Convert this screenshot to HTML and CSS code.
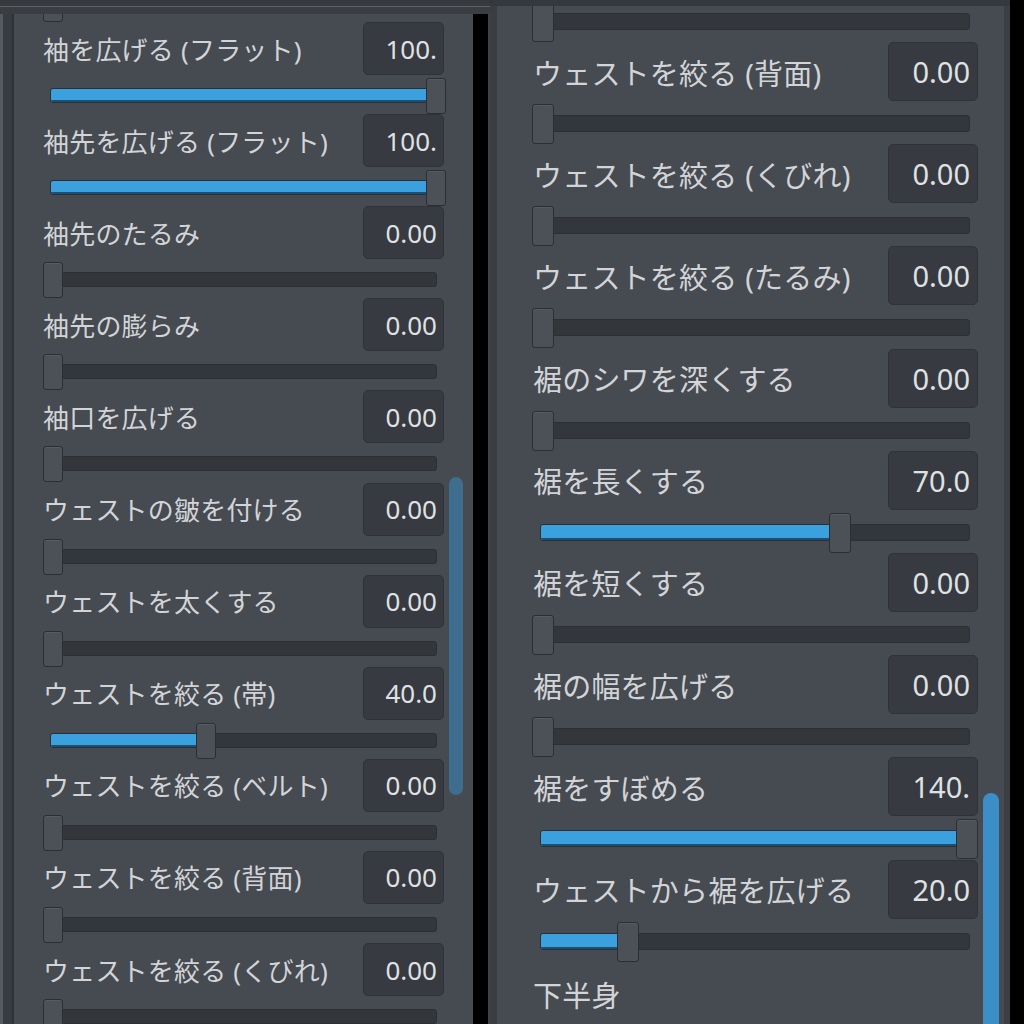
FILE: index.html
```html
<!DOCTYPE html>
<html lang="ja">
<head>
<meta charset="utf-8">
<title>Sliders</title>
<link rel="stylesheet" href="styles.css">
</head>
<body>
<div class="screen">
  <section class="half half-left">
    <div class="topbar-left"></div>
    <div class="body-left">
      <div class="edge-light"></div>
      <div class="edge-dark"></div>
      <div class="edge-border"></div>
      <div class="panel panel-left">
        <div class="list list-left">
          <div class="slider s-left"><div class="track"><div class="fill" style="width:0px"></div></div><div class="handle" style="left:0px"></div></div>

          <div class="hdr h-left"><span class="label">袖を広げる (フラット)</span><span class="box">100.</span></div>
          <div class="slider s-left"><div class="track"><div class="fill" style="width:380px"></div></div><div class="handle" style="left:383px"></div></div>

          <div class="hdr h-left"><span class="label">袖先を広げる (フラット)</span><span class="box">100.</span></div>
          <div class="slider s-left"><div class="track"><div class="fill" style="width:380px"></div></div><div class="handle" style="left:383px"></div></div>

          <div class="hdr h-left"><span class="label">袖先のたるみ</span><span class="box">0.00</span></div>
          <div class="slider s-left"><div class="track"><div class="fill" style="width:0px"></div></div><div class="handle" style="left:0px"></div></div>

          <div class="hdr h-left"><span class="label">袖先の膨らみ</span><span class="box">0.00</span></div>
          <div class="slider s-left"><div class="track"><div class="fill" style="width:0px"></div></div><div class="handle" style="left:0px"></div></div>

          <div class="hdr h-left"><span class="label">袖口を広げる</span><span class="box">0.00</span></div>
          <div class="slider s-left"><div class="track"><div class="fill" style="width:0px"></div></div><div class="handle" style="left:0px"></div></div>

          <div class="hdr h-left"><span class="label">ウェストの皺を付ける</span><span class="box">0.00</span></div>
          <div class="slider s-left"><div class="track"><div class="fill" style="width:0px"></div></div><div class="handle" style="left:0px"></div></div>

          <div class="hdr h-left"><span class="label">ウェストを太くする</span><span class="box">0.00</span></div>
          <div class="slider s-left"><div class="track"><div class="fill" style="width:0px"></div></div><div class="handle" style="left:0px"></div></div>

          <div class="hdr h-left"><span class="label">ウェストを絞る (帯)</span><span class="box">40.0</span></div>
          <div class="slider s-left"><div class="track"><div class="fill" style="width:149px"></div></div><div class="handle" style="left:153px"></div></div>

          <div class="hdr h-left"><span class="label">ウェストを絞る (ベルト)</span><span class="box">0.00</span></div>
          <div class="slider s-left"><div class="track"><div class="fill" style="width:0px"></div></div><div class="handle" style="left:0px"></div></div>

          <div class="hdr h-left"><span class="label">ウェストを絞る (背面)</span><span class="box">0.00</span></div>
          <div class="slider s-left"><div class="track"><div class="fill" style="width:0px"></div></div><div class="handle" style="left:0px"></div></div>

          <div class="hdr h-left"><span class="label">ウェストを絞る (くびれ)</span><span class="box">0.00</span></div>
          <div class="slider s-left"><div class="track"><div class="fill" style="width:0px"></div></div><div class="handle" style="left:0px"></div></div>
        </div>
        <div class="scroll scroll-left"></div>
      </div>
      <div class="gap-black"></div>
      <div class="gap-gray"></div>
    </div>
  </section>

  <section class="half half-right">
    <div class="topbar-right"></div>
    <div class="body-right">
      <div class="edge-right-l"></div>
      <div class="panel panel-right">
        <div class="list list-right">
          <div class="slider s-right"><div class="track"><div class="fill" style="width:0px"></div></div><div class="handle" style="left:0px"></div></div>

          <div class="hdr h-right"><span class="label">ウェストを絞る (背面)</span><span class="box">0.00</span></div>
          <div class="slider s-right"><div class="track"><div class="fill" style="width:0px"></div></div><div class="handle" style="left:0px"></div></div>

          <div class="hdr h-right"><span class="label">ウェストを絞る (くびれ)</span><span class="box">0.00</span></div>
          <div class="slider s-right"><div class="track"><div class="fill" style="width:0px"></div></div><div class="handle" style="left:0px"></div></div>

          <div class="hdr h-right"><span class="label">ウェストを絞る (たるみ)</span><span class="box">0.00</span></div>
          <div class="slider s-right"><div class="track"><div class="fill" style="width:0px"></div></div><div class="handle" style="left:0px"></div></div>

          <div class="hdr h-right"><span class="label">裾のシワを深くする</span><span class="box">0.00</span></div>
          <div class="slider s-right"><div class="track"><div class="fill" style="width:0px"></div></div><div class="handle" style="left:0px"></div></div>

          <div class="hdr h-right"><span class="label">裾を長くする</span><span class="box">70.0</span></div>
          <div class="slider s-right"><div class="track"><div class="fill" style="width:293px"></div></div><div class="handle" style="left:297px"></div></div>

          <div class="hdr h-right"><span class="label">裾を短くする</span><span class="box">0.00</span></div>
          <div class="slider s-right"><div class="track"><div class="fill" style="width:0px"></div></div><div class="handle" style="left:0px"></div></div>

          <div class="hdr h-right"><span class="label">裾の幅を広げる</span><span class="box">0.00</span></div>
          <div class="slider s-right"><div class="track"><div class="fill" style="width:0px"></div></div><div class="handle" style="left:0px"></div></div>

          <div class="hdr h-right"><span class="label">裾をすぼめる</span><span class="box">140.</span></div>
          <div class="slider s-right"><div class="track"><div class="fill" style="width:420px"></div></div><div class="handle" style="left:424px"></div></div>

          <div class="hdr h-right"><span class="label">ウェストから裾を広げる</span><span class="box">20.0</span></div>
          <div class="slider s-right"><div class="track"><div class="fill" style="width:81px"></div></div><div class="handle" style="left:85px"></div></div>

          <div class="section"><span class="label">下半身</span></div>
        </div>
        <div class="scroll scroll-right"></div>
      </div>
      <div class="edge-right-r"></div>
      <div class="edge-right-black"></div>
    </div>
  </section>
</div>
</body>
</html>
```

FILE: styles.css
```css
* { box-sizing: border-box; }

html, body {
  margin: 0;
  padding: 0;
  background: #000;
}

body {
  width: 1024px;
  height: 1024px;
  overflow: hidden;
  font-family: "Noto Sans", "Noto Sans CJK JP", sans-serif;
}

.screen {
  display: flex;
  width: 1024px;
  height: 1024px;
}

.half {
  display: flex;
  flex-direction: column;
  height: 1024px;
}

.half-left { width: 490px; }
.half-right { width: 534px; }

.topbar-left {
  height: 14px;
  flex: none;
  background: linear-gradient(to bottom, #36393e 0 6px, #5e6267 6px 7px, #3a3d42 7px 14px);
}

.topbar-right {
  height: 6px;
  flex: none;
  margin-right: 14px;
  background: #35383c;
}

.body-left, .body-right {
  display: flex;
  flex: 1;
  min-height: 0;
}

.edge-light { width: 3px; background: #575a5f; }
.edge-dark { width: 9px; background: #383b40; }
.edge-border { width: 2px; background: #2e3135; }

.gap-black { width: 15px; background: #000; }
.gap-gray { width: 2px; background: #3e4146; }

.edge-right-l { width: 7px; background: #3a3d41; }
.edge-right-r { width: 6px; background: #3b3e43; }
.edge-right-black { width: 14px; background: #000; }

.panel {
  position: relative;
  overflow: hidden;
  background: #464a51;
}

.panel-left { width: 459px; }
.panel-right { width: 507px; }

.list {
  display: flex;
  flex-direction: column;
}

.list-left { margin-top: -31px; }
.list-right { margin-top: -7.2px; }

.hdr {
  display: flex;
  align-items: center;
  justify-content: space-between;
  flex: none;
}

.label {
  color: #d2d4d7;
  white-space: nowrap;
  letter-spacing: 0.2px;
}

.box {
  display: flex;
  align-items: center;
  justify-content: flex-end;
  background: #373a40;
  border: 1px solid #2f3237;
  border-radius: 5px;
  color: #dfe1e3;
  overflow: hidden;
  white-space: nowrap;
}

.h-left {
  height: 53px;
  padding: 0 29px;
  font-size: 26px;
}

.h-left .box {
  width: 81px;
  height: 53px;
  padding-right: 6px;
}

.h-right {
  height: 59px;
  padding: 0 26px 0 36px;
  font-size: 29px;
}

.h-right .box {
  width: 90px;
  height: 59px;
  padding-right: 7px;
}

.slider {
  position: relative;
  flex: none;
}

.s-left {
  margin: 3px 0 0 29px;
  width: 403px;
  height: 36.1px;
}

.s-right {
  margin: 3px 0 0 35px;
  width: 446px;
  height: 40.2px;
}

.track {
  position: absolute;
  background: #33363b;
  border: 1px solid #2c2f33;
  border-radius: 3px;
  overflow: hidden;
}

.s-left .track {
  left: 7px;
  right: 9px;
  top: 10px;
  height: 15px;
}

.s-right .track {
  left: 8px;
  right: 8px;
  top: 11px;
  height: 17px;
}

.fill {
  height: 100%;
  background: #3aa0de;
  box-shadow: inset 0 -2px 0 #1f4e6e;
}

.handle {
  position: absolute;
  top: 0;
  background: #4c5057;
  border: 1px solid #2b2e32;
  border-radius: 3px;
  box-shadow: inset 0 1px 0 #575b62;
}

.s-left .handle {
  width: 20px;
  height: 36px;
}

.s-right .handle {
  width: 22px;
  height: 40px;
}

.section {
  display: flex;
  align-items: center;
  height: 44px;
  margin-top: 10px;
  padding-left: 36px;
  font-size: 29px;
}

.scroll {
  position: absolute;
}

.scroll-left {
  left: 435px;
  top: 463px;
  width: 14px;
  height: 318px;
  border-radius: 7px;
  background: #3e6d8d;
}

.scroll-right {
  left: 486px;
  top: 787px;
  width: 16px;
  height: 300px;
  border-radius: 8px;
  background: #3b8fc6;
}
```
